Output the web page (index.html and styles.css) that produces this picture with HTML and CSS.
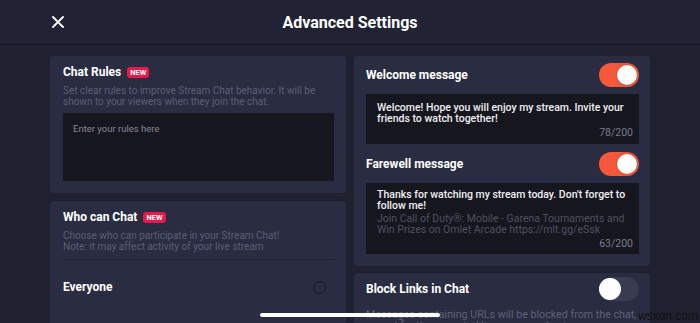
FILE: index.html
```html
<!DOCTYPE html>
<html lang="en">
<head>
  <meta charset="UTF-8" />
  <meta name="viewport" content="width=device-width, initial-scale=1.0" />
  <title>Advanced Settings</title>
  <link rel="stylesheet" href="styles.css">
</head>
<body>
  <header class="topbar">
    <button class="close-btn" aria-label="close">
      <svg width="12" height="12" viewBox="0 0 12 12"><path d="M1 1L11 11M11 1L1 11" stroke="#fff" stroke-width="1.8" stroke-linecap="round"/></svg>
    </button>
    <h1 class="title">Advanced Settings</h1>
  </header>

  <main class="content">
    <div class="col left">
      <section class="card rules">
        <div class="card-head"><span class="card-title">Chat Rules</span><span class="badge">NEW</span></div>
        <p class="desc">Set clear rules to improve Stream Chat behavior. It will be shown to your viewers when they join the chat.</p>
        <div class="field rules-field"><span class="placeholder">Enter your rules here</span></div>
      </section>

      <section class="card who">
        <div class="card-head"><span class="card-title">Who can Chat</span><span class="badge">NEW</span></div>
        <p class="desc">Choose who can participate in your Stream Chat!<br>Note: it may affect activity of your live stream</p>
        <div class="divider"></div>
        <div class="option"><span class="option-label">Everyone</span><span class="radio"></span></div>
      </section>
    </div>

    <div class="col right">
      <section class="card messages">
        <div class="toggle-row"><span class="card-title">Welcome message</span><span class="toggle on"><i></i></span></div>
        <div class="field msg-field welcome">
          <p class="msg">Welcome! Hope you will enjoy my stream. Invite your friends to watch together!</p>
          <div class="counter">78/200</div>
        </div>
        <div class="toggle-row second"><span class="card-title">Farewell message</span><span class="toggle on"><i></i></span></div>
        <div class="field msg-field farewell">
          <p class="msg">Thanks for watching my stream today. Don't forget to follow me!</p>
          <p class="msg muted">Join Call of Duty®: Mobile - Garena Tournaments and Win Prizes on Omlet Arcade https://mlt.gg/eSsk</p>
          <div class="counter">63/200</div>
        </div>
      </section>

      <section class="card links">
        <div class="toggle-row"><span class="card-title">Block Links in Chat</span><span class="toggle"><i></i></span></div>
        <p class="desc links-desc">Messages containing URLs will be blocked from the chat, except for those posted by you or moderators.</p>
      </section>
    </div>
  </main>

  <div class="home-bar"></div>
  <div class="watermark">wsxdn.com</div>
</body>
</html>
```

FILE: styles.css
```css
*{margin:0;padding:0;box-sizing:border-box;}
html,body{width:100%;height:100%;overflow:hidden;}
body{background:#1f2130;font-family:'Roboto','Liberation Sans',sans-serif;color:#fff;position:relative;}

.topbar{height:45px;background:#212334;border-bottom:1px solid #191a26;display:flex;align-items:center;justify-content:center;position:relative;}
.close-btn{position:absolute;left:52px;top:16px;background:none;border:none;width:12px;height:12px;display:flex;}
.title{font-size:16px;font-weight:700;}

.content{display:grid;grid-template-columns:296px 296px;gap:8px;justify-content:center;padding-top:11px;}
.col{display:flex;flex-direction:column;gap:7px;}
.col.left{gap:8px;}
.card{background:#2a2c41;border-radius:4px;}

.card-head{display:flex;align-items:center;gap:6px;height:14px;}
.card-title{font-size:12px;font-weight:700;}
.badge{background:#e5194c;color:#fff;font-size:7.5px;font-weight:700;padding:1px 3px;border-radius:3px;line-height:9px;}
.desc{font-size:10px;line-height:11px;color:#5c5f75;}

.rules{padding:9px 12px 12px 13px;}
.rules .desc{margin-top:6px;}
.field{background:#16161f;}
.rules-field{height:68px;margin-top:6px;padding:10px 10px;font-size:9.5px;line-height:11px;}
.placeholder{color:#868896;}

.who{padding:9px 11px 0 13px;height:140px;}
.who .desc{margin-top:6px;}
.divider{height:1px;background:#202232;margin-top:7px;}
.option{height:54px;display:flex;align-items:center;justify-content:space-between;padding-right:9px;}
.option-label{font-size:12px;font-weight:700;}
.radio{width:13px;height:13px;border-radius:50%;border:1px solid #171822;}

.messages{padding:7px 11px 12px 12px;}
.toggle-row{display:flex;align-items:center;justify-content:space-between;height:24px;}
.toggle-row.second{margin-top:8px;}
.toggle{width:40px;height:24px;border-radius:12px;background:#393b50;display:flex;align-items:center;padding:0 2px;}
.toggle i{width:20px;height:20px;border-radius:50%;background:#fff;display:block;}
.toggle.on{background:#f5583a;justify-content:flex-end;}
.toggle.on i{box-shadow:0 0 2px rgba(0,0,0,0.3);}
.links .toggle i{width:22px;height:22px;margin-left:-2px;}

.msg-field{margin-top:7px;padding-left:11px;padding-right:6px;}
.msg-field.welcome{padding-top:8px;padding-bottom:6px;}
.msg-field.farewell{padding-top:6px;padding-bottom:5px;}
.msg{font-size:10.5px;line-height:11px;color:#f0f0f3;font-weight:500;}
.msg.muted{color:#4d5062;font-weight:400;margin-top:2px;}
.counter{text-align:right;font-size:10.5px;line-height:11px;color:#7b7d8b;margin-top:3px;}

.links{padding:4px 11px 0 12px;height:60px;}
.links-desc{margin-top:8px;font-size:10.7px;color:#5e6177;}

.home-bar{position:absolute;left:260px;top:313px;width:180px;height:4px;border-radius:2px;background:#fff;}
.watermark{position:absolute;right:0;top:309px;font-family:'Liberation Sans',sans-serif;font-size:12px;color:#111;padding:0 2px;}
```
